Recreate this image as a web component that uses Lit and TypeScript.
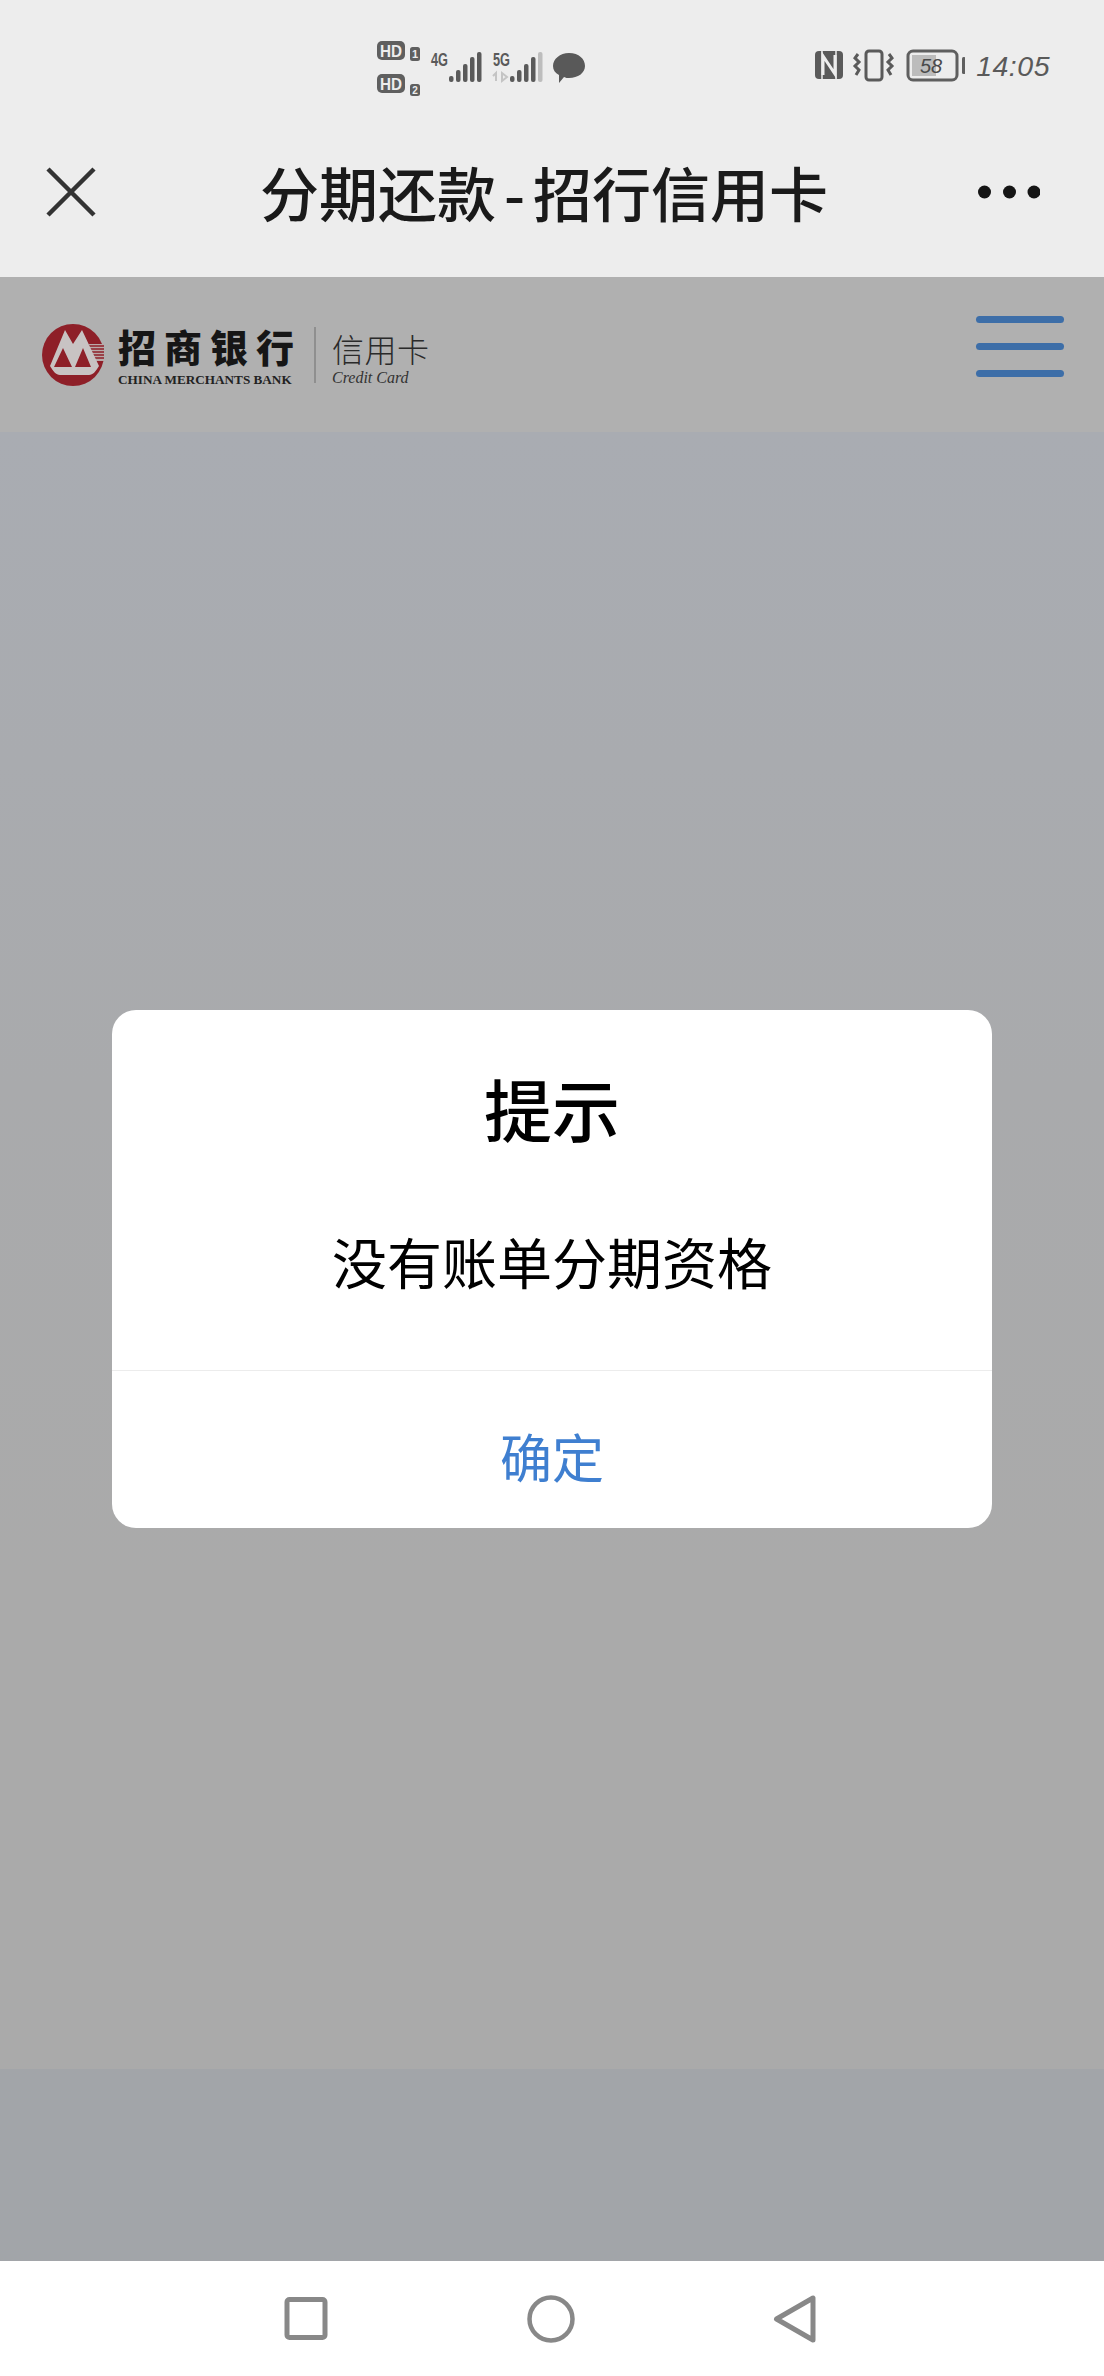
import { LitElement, html, css } from 'lit';
import { customElement } from 'lit/decorators.js';

@customElement('app-root')
export class AppRoot extends LitElement {
  static styles = css`
    :host {
      display: block;
      font-family: 'Noto Sans CJK SC', 'Noto Sans', sans-serif;
    }
    svg {
      display: block;
      flex: none;
    }
    .screen {
      display: flex;
      flex-direction: column;
      height: 2376px;
      background: #fff;
    }
    .top {
      background: #ededed;
    }
    .status {
      display: flex;
      align-items: center;
      justify-content: space-between;
      height: 133px;
      padding: 0 54px 0 377px;
      box-sizing: border-box;
    }
    .status-right {
      display: flex;
      align-items: center;
      gap: 11px;
      margin-top: -2px;
    }
    .status-left {
      margin-top: 3px;
    }
    .time {
      font-family: 'Liberation Sans', sans-serif;
      font-style: italic;
      font-size: 28.5px;
      line-height: 40px;
      color: #5a5a5a;
      letter-spacing: 0.5px;
    }
    .titlebar {
      display: flex;
      align-items: center;
      justify-content: space-between;
      height: 144px;
      padding: 0 64px 26px 46px;
      box-sizing: border-box;
    }
    .title {
      font-size: 59px;
      line-height: 80px;
      font-weight: 500;
      color: #1a1a1a;
      white-space: nowrap;
      margin-left: 14px;
    }
    .dash {
      margin: 0 8px;
    }
    .web {
      position: relative;
      flex: 1;
      display: flex;
      flex-direction: column;
    }
    .header {
      display: flex;
      align-items: center;
      justify-content: space-between;
      height: 155px;
      padding: 0 40px 0 42px;
      box-sizing: border-box;
      background: #b0b0b0;
    }
    .logo {
      display: flex;
      align-items: center;
    }
    .bank {
      margin-left: 14px;
      padding-top: 3px;
      width: 176px;
    }
    .bank-cn {
      display: flex;
      justify-content: space-between;
      font-size: 38px;
      line-height: 42px;
      font-weight: 900;
      color: #161616;
    }
    .bank-en {
      margin-top: 6px;
      font-family: 'Liberation Serif', serif;
      font-size: 13.2px;
      line-height: 14px;
      font-weight: 700;
      color: #222;
      white-space: nowrap;
    }
    .sep {
      width: 2px;
      height: 56px;
      margin: 0 16px 0 20px;
      background: #8f8f8f;
    }
    .card {
      padding-top: 6px;
    }
    .card-cn {
      font-size: 32px;
      line-height: 38px;
      font-weight: 300;
      color: #2a2a2a;
      letter-spacing: 0.5px;
    }
    .card-en {
      margin-top: 3px;
      font-family: 'Liberation Serif', serif;
      font-style: italic;
      font-size: 16px;
      line-height: 16px;
      color: #333;
      white-space: nowrap;
    }
    .menu {
      display: flex;
      flex-direction: column;
      gap: 20px;
      width: 88px;
      margin-top: -16px;
    }
    .menu span {
      height: 7px;
      border-radius: 4px;
      background: #3d6ea8;
    }
    .content {
      flex: 1;
      background: linear-gradient(#a9acb2, #a9aaac 40%, #aaaaaa 70%);
    }
    .footer {
      height: 192px;
      background: #a2a5a9;
    }
    .overlay {
      position: absolute;
      inset: 0;
      display: flex;
      align-items: center;
      justify-content: center;
    }
    .dialog {
      width: 880px;
      border-radius: 24px;
      background: #fff;
      text-align: center;
    }
    .dialog-body {
      display: flex;
      flex-direction: column;
      align-items: center;
      height: 361px;
      padding-top: 50px;
      box-sizing: border-box;
      border-bottom: 1px solid #ececec;
    }
    .dialog-title {
      font-size: 68px;
      line-height: 96px;
      font-weight: 500;
      color: #000;
    }
    .dialog-msg {
      margin-top: 66px;
      font-size: 55px;
      line-height: 76px;
      color: #000;
    }
    .dialog-btn {
      height: 157px;
      padding-top: 13px;
      box-sizing: border-box;
      font-size: 52px;
      line-height: 144px;
      color: #3f7fd0;
    }
    .nav {
      display: flex;
      align-items: center;
      justify-content: space-between;
      height: 115px;
      padding: 0 287px 0 283px;
      box-sizing: border-box;
    }
  `;

  render() {
    return html`
      <div class="screen">
        <div class="top">
          <div class="status">
            ${this.renderStatusLeft()}
            <div class="status-right">
              ${this.renderStatusRight()}
              <span class="time">14:05</span>
            </div>
          </div>
          <div class="titlebar">
            <svg width="50" height="50" viewBox="0 0 50 50" fill="none" stroke="#333" stroke-width="4.5">
              <path d="M2 2 L48 48 M48 2 L2 48" />
            </svg>
            <div class="title">分期还款<span class="dash">-</span>招行信用卡</div>
            <svg width="62" height="14" viewBox="0 0 62 14" fill="#151515">
              <circle cx="6.5" cy="7" r="6.5" />
              <circle cx="31.5" cy="7" r="6.5" />
              <circle cx="56" cy="7" r="6.5" />
            </svg>
          </div>
        </div>
        <div class="web">
          <div class="header">
            <div class="logo">
              ${this.renderBankMark()}
              <div class="bank">
                <div class="bank-cn"><span>招</span><span>商</span><span>银</span><span>行</span></div>
                <div class="bank-en">CHINA MERCHANTS BANK</div>
              </div>
              <div class="sep"></div>
              <div class="card">
                <div class="card-cn">信用卡</div>
                <div class="card-en">Credit Card</div>
              </div>
            </div>
            <div class="menu"><span></span><span></span><span></span></div>
          </div>
          <div class="content"></div>
          <div class="footer"></div>
          <div class="overlay">
            <div class="dialog">
              <div class="dialog-body">
                <div class="dialog-title">提示</div>
                <div class="dialog-msg">没有账单分期资格</div>
              </div>
              <div class="dialog-btn">确定</div>
            </div>
          </div>
        </div>
        <div class="nav">
          <svg width="46" height="46" viewBox="0 0 46 46" fill="none" stroke="#888" stroke-width="5">
            <rect x="4" y="3.5" width="38" height="38" rx="2.5" />
          </svg>
          <svg width="48" height="48" viewBox="0 0 48 48" fill="none" stroke="#888" stroke-width="4.5">
            <circle cx="24" cy="24" r="21.5" />
          </svg>
          <svg width="44" height="50" viewBox="0 0 44 50" fill="none" stroke="#888" stroke-width="5" stroke-linejoin="round">
            <path d="M40 4 L40 46 L3.5 25 Z" />
          </svg>
        </div>
      </div>
    `;
  }

  private renderStatusLeft() {
    const bars = (x: number, last: string) => [0, 1, 2, 3, 4].map((i) => {
      const h = [6, 12, 18, 25, 30][i];
      return html`<svg x=${x + i * 7} y=${81 - h} width="4.5" height=${h} overflow="visible">
        <rect width="4.5" height=${h} rx="2" fill=${i === 4 ? last : '#5a5a5a'} />
      </svg>`;
    });
    return html`
      <svg class="status-left" width="208" height="62" viewBox="377 36 208 62" font-family="Liberation Sans, sans-serif" font-weight="700">
        <rect x="377" y="40" width="28" height="19" rx="5" fill="#5f5f5f" />
        <text x="380" y="55.5" font-size="16" fill="#ededed" textLength="22" lengthAdjust="spacingAndGlyphs">HD</text>
        <rect x="410" y="46" width="10" height="14" rx="2.5" fill="#5f5f5f" />
        <text x="415" y="57" font-size="11" fill="#ededed" text-anchor="middle">1</text>
        <rect x="377" y="73" width="28" height="19" rx="5" fill="#5f5f5f" />
        <text x="380" y="88.5" font-size="16" fill="#ededed" textLength="22" lengthAdjust="spacingAndGlyphs">HD</text>
        <rect x="410" y="83" width="10" height="12" rx="2.5" fill="#5f5f5f" />
        <text x="415" y="93" font-size="10" fill="#ededed" text-anchor="middle">2</text>
        <text x="431" y="65" font-size="18" fill="#5a5a5a" textLength="17" lengthAdjust="spacingAndGlyphs">4G</text>
        ${bars(449, '#5a5a5a')}
        <text x="493" y="65" font-size="18" fill="#5a5a5a" textLength="17" lengthAdjust="spacingAndGlyphs">5G</text>
        <path d="M496 80 V72 L493 75 M502 72 V80 L507 76 Z" fill="none" stroke="#c4c4c4" stroke-width="2" />
        ${bars(510, '#bdbdbd')}
        <path d="M569 52 C579 52 585 58 585 65 C585 72 578 77 569 77 C567 77 566 77 564 76 L559 82 L559 74 C555 72 553 69 553 65 C553 58 560 52 569 52 Z" fill="#595959" />
      </svg>
    `;
  }

  private renderStatusRight() {
    return html`
      <svg width="150" height="42" viewBox="814 46 150 42" fill="none">
        <path d="M818 52 H838 Q842 52 842 56 V76 Q842 80 838 80 H818 Q814 80 814 76 V56 Q814 52 818 52 Z" fill="#5a5a5a" />
        <path d="M821 52 L821 80 M835 52 L835 80" stroke="#ededed" stroke-width="1.5" />
        <path d="M822 76 V57 L834 75 V56" stroke="#ededed" stroke-width="3" />
        <rect x="865" y="52" width="16" height="29" rx="3" stroke="#5a5a5a" stroke-width="3" />
        <path d="M857 55 L854 59 L858 63 L854 67 L858 71 L855 76 M888 55 L891 59 L887 63 L891 67 L887 71 L890 76" stroke="#5a5a5a" stroke-width="3" />
        <rect x="907" y="52" width="49" height="29" rx="5" stroke="#5f5f5f" stroke-width="3" />
        <rect x="911" y="56" width="24" height="21" fill="#bcbcbc" />
        <text x="930" y="74" font-family="Liberation Sans, sans-serif" font-style="italic" font-size="20" fill="#4a4a4a" text-anchor="middle">58</text>
        <rect x="961" y="58" width="3.5" height="17" rx="1.5" fill="#5f5f5f" />
      </svg>
    `;
  }

  private renderBankMark() {
    return html`
      <svg width="62" height="62" viewBox="0 0 62 62">
        <circle cx="31" cy="31" r="31" fill="#8e1f28" />
        <path d="M47 20 H62 V37 H49 Z" fill="#b9a9a9" />
        <path d="M47 22 H62 M47 25 H62 M47 28 H62 M47 31 H62 M47 34 H62" stroke="#8e1f28" stroke-width="1.3" />
        <path d="M8 42 L23 6 L31 20 L40 6 L57 42 C54 47 51 51 47 51 L18 51 C14 51 11 47 8 42 Z" fill="#c8c3c3" />
        <path d="M12 43 L21 24 L30 43 Z M33 43 L41 24 L49 43 Z" fill="#8e1f28" />
      </svg>
    `;
  }
}
